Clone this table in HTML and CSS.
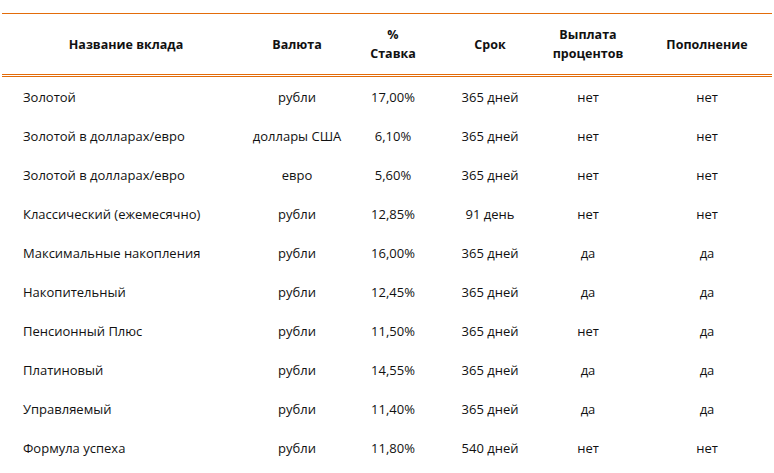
FILE: index.html
```html
<!DOCTYPE html>
<html lang="ru">
<head>
<meta charset="utf-8">
<link rel="stylesheet" href="styles.css">
</head>
<body>
<div class="wrap">
<table class="deposits">
<colgroup>
<col class="c1"><col class="c2"><col class="c3"><col class="c4"><col class="c5"><col class="c6">
</colgroup>
<thead>
<tr><th>Название вклада</th><th>Валюта</th><th>%<br>Ставка</th><th>Срок</th><th>Выплата<br>процентов</th><th class="last">Пополнение</th></tr>
</thead>
<tbody>
<tr><td class="name">Золотой</td><td>рубли</td><td>17,00%</td><td>365 дней</td><td>нет</td><td class="last">нет</td></tr>
<tr><td class="name">Золотой в долларах/евро</td><td>доллары США</td><td>6,10%</td><td>365 дней</td><td>нет</td><td class="last">нет</td></tr>
<tr><td class="name">Золотой в долларах/евро</td><td>евро</td><td>5,60%</td><td>365 дней</td><td>нет</td><td class="last">нет</td></tr>
<tr><td class="name">Классический (ежемесячно)</td><td>рубли</td><td>12,85%</td><td>91 день</td><td>нет</td><td class="last">нет</td></tr>
<tr><td class="name">Максимальные накопления</td><td>рубли</td><td>16,00%</td><td>365 дней</td><td>да</td><td class="last">да</td></tr>
<tr><td class="name">Накопительный</td><td>рубли</td><td>12,45%</td><td>365 дней</td><td>да</td><td class="last">да</td></tr>
<tr><td class="name">Пенсионный Плюс</td><td>рубли</td><td>11,50%</td><td>365 дней</td><td>нет</td><td class="last">да</td></tr>
<tr><td class="name">Платиновый</td><td>рубли</td><td>14,55%</td><td>365 дней</td><td>да</td><td class="last">да</td></tr>
<tr><td class="name">Управляемый</td><td>рубли</td><td>11,40%</td><td>365 дней</td><td>да</td><td class="last">да</td></tr>
<tr><td class="name">Формула успеха</td><td>рубли</td><td>11,80%</td><td>540 дней</td><td>нет</td><td class="last">нет</td></tr>
</tbody>
</table>
</div>
</body>
</html>
```
FILE: styles.css
```css
html, body {
  margin: 0;
  padding: 0;
  background: #ffffff;
}
.wrap {
  padding: 13px 2px 0 2px;
}
.deposits {
  width: 770px;
  border-collapse: separate;
  border-spacing: 0;
  table-layout: fixed;
  font-family: "Open Sans", "Liberation Sans", sans-serif;
  font-size: 13px;
  color: #111111;
}
.c1 { width: 248px; }
.c2 { width: 94px; }
.c3 { width: 98px; }
.c4 { width: 96px; }
.c5 { width: 100px; }
.c6 { width: 134px; }
.deposits thead th {
  height: 60px;
  padding: 0;
  font-size: 12.5px;
  font-weight: bold;
  line-height: 19px;
  text-align: center;
  vertical-align: middle;
  border-top: 1px solid #e36c0a;
  border-bottom: 3px double #e36c0a;
}
.deposits td {
  height: 39px;
  padding: 0;
  text-align: center;
  vertical-align: middle;
  white-space: nowrap;
}
.deposits td.name {
  text-align: left;
  padding-left: 21px;
}
.deposits .last {
  padding-left: 4px;
}
```
